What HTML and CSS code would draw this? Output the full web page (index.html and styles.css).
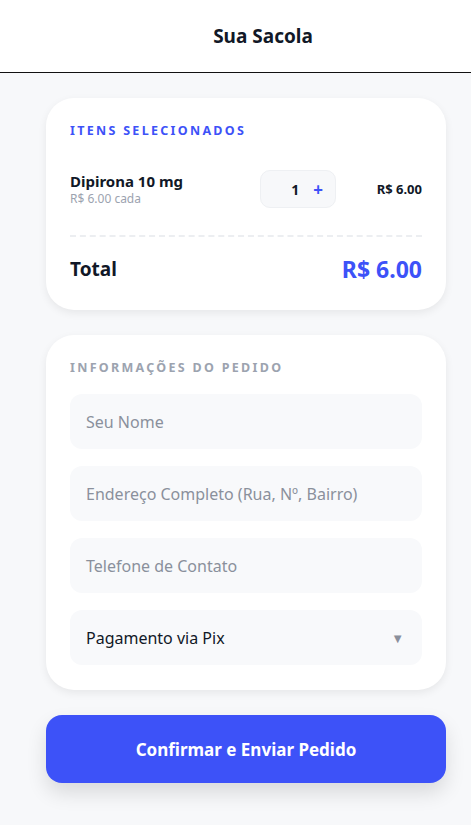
FILE: index.html
```html
<!DOCTYPE html>
<html lang="pt-BR">
<head>
<meta charset="utf-8">
<title>Sua Sacola</title>
<link rel="stylesheet" href="styles.css">
</head>
<body>
<header class="topbar">
  <span class="topbar-spacer"></span>
  <h1 class="topbar-title">Sua Sacola</h1>
</header>
<main class="content">
  <section class="card">
    <h2 class="section-label section-label--accent">ITENS SELECIONADOS</h2>
    <div class="item-row">
      <div class="item-info">
        <div class="item-name">Dipirona 10 mg</div>
        <div class="item-unit">R$ 6.00 cada</div>
      </div>
      <div class="qty-box">
        <span class="qty-num">1</span>
        <span class="qty-plus">+</span>
      </div>
      <div class="item-price">R$ 6.00</div>
    </div>
    <div class="divider"></div>
    <div class="total-row">
      <span class="total-label">Total</span>
      <span class="total-value">R$ 6.00</span>
    </div>
  </section>
  <section class="card card--form">
    <h2 class="section-label section-label--muted">INFORMAÇÕES DO PEDIDO</h2>
    <div class="field field--placeholder">Seu Nome</div>
    <div class="field field--placeholder">Endereço Completo (Rua, Nº, Bairro)</div>
    <div class="field field--placeholder">Telefone de Contato</div>
    <div class="field field--select"><span>Pagamento via Pix</span><span class="caret">▼</span></div>
  </section>
  <button class="confirm-btn">Confirmar e Enviar Pedido</button>
</main>
</body>
</html>
```
FILE: styles.css
```css
* { box-sizing: border-box; }
html, body { margin: 0; padding: 0; }
body {
  background: #f7f8fa;
  font-family: "Noto Sans", "Open Sans", sans-serif;
  color: #111827;
  width: 471px;
  min-height: 825px;
}
.topbar {
  height: 73px;
  background: #ffffff;
  border-bottom: 1px solid #111111;
  display: flex;
  align-items: center;
  justify-content: center;
}
.topbar-spacer { width: 55px; }
.topbar-title {
  margin: 0;
  font-size: 19px;
  font-weight: 700;
  color: #111827;
}
.content {
  padding: 25px 25px 40px 46px;
  width: 471px;
  display: flex;
  flex-direction: column;
  gap: 25px;
}
.card {
  width: 400px;
  background: #ffffff;
  border-radius: 28px;
  padding: 24px;
  box-shadow: 0 3px 8px rgba(0,0,0,0.07);
}
.section-label {
  margin: 0;
  font-size: 12.5px;
  font-weight: 700;
  letter-spacing: 2.3px;
  line-height: 18px;
}
.section-label--accent { color: #3d52f8; }
.section-label--muted { color: #9ca3af; }
.item-row {
  display: flex;
  align-items: center;
  margin-top: 30px;
}
.item-info { flex: 1; }
.item-name { font-size: 15px; font-weight: 700; line-height: 19px; }
.item-unit { font-size: 12px; color: #9ca3af; line-height: 16px; }
.qty-box {
  width: 76px;
  height: 38px;
  background: #f7f8fa;
  border: 1px solid #eef0f3;
  border-radius: 10px;
  display: flex;
  align-items: center;
  justify-content: flex-end;
  gap: 14px;
  padding-right: 12px;
}
.qty-num { font-size: 14px; font-weight: 700; }
.qty-plus { font-size: 17px; font-weight: 700; color: #3d52f8; }
.item-price {
  width: 86px;
  text-align: right;
  font-size: 13px;
  font-weight: 700;
}
.divider {
  margin-top: 27px;
  border-top: 2px dashed #eceef1;
}
.total-row {
  display: flex;
  justify-content: space-between;
  align-items: center;
  margin-top: 16px;
  padding-bottom: 1px;
}
.total-label { font-size: 19px; font-weight: 700; }
.total-value { font-size: 23px; font-weight: 700; color: #3d52f8; }
.card--form {
  display: flex;
  flex-direction: column;
  gap: 17px;
  padding-bottom: 25px;
}
.field {
  height: 55px;
  background: #f8f9fb;
  border-radius: 12px;
  padding: 0 16px;
  display: flex;
  align-items: center;
  font-size: 16px;
}
.field--placeholder { color: #8a909c; }
.field--select { color: #111827; justify-content: space-between; }
.caret { color: #8a909c; font-size: 13px; padding-right: 2px; }
.confirm-btn {
  width: 400px;
  height: 68px;
  border: none;
  border-radius: 16px;
  background: #3d52f8;
  color: #ffffff;
  font-family: inherit;
  font-size: 17px;
  font-weight: 700;
  box-shadow: 0 10px 20px rgba(0,0,0,0.12);
}
```
